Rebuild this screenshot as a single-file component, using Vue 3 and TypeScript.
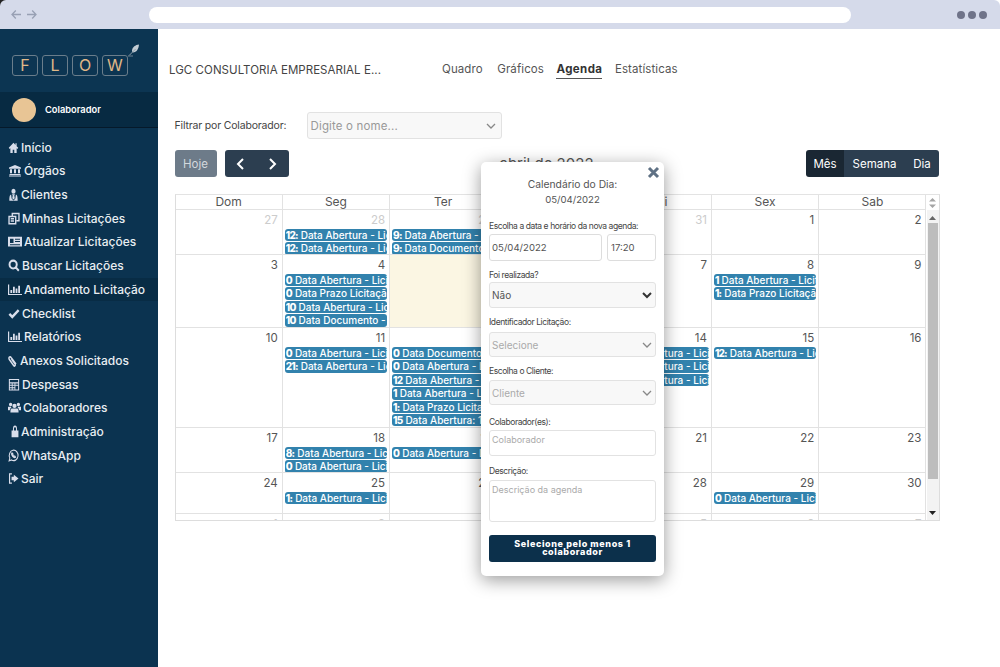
<script setup lang="ts">
interface Ev { n: string; t: string }
interface Cell { d: number; out?: boolean; now?: boolean; ev?: Ev[] }
interface Icon { fill?: string; stroke?: string; w: number; ml?: number; sw?: number }

const ab = 'Data Abertura - Licitação'
const pr = 'Data Prazo Licitação'
const doc = 'Data Documento - Licitação'

const weeks: { h: number; cells: Cell[] }[] = [
  { h: 45, cells: [
    { d: 27, out: true },
    { d: 28, out: true, ev: [{ n: '12:', t: ab }, { n: '12:', t: ab }] },
    { d: 29, out: true, ev: [{ n: '9:', t: ab }, { n: '9:', t: doc }] },
    { d: 30, out: true }, { d: 31, out: true }, { d: 1 }, { d: 2 }
  ] },
  { h: 73, cells: [
    { d: 3 },
    { d: 4, ev: [{ n: '0', t: ab }, { n: '0', t: pr }, { n: '10', t: ab }, { n: '10', t: doc }] },
    { d: 5, now: true }, { d: 6 }, { d: 7 },
    { d: 8, ev: [{ n: '1', t: ab }, { n: '1:', t: pr }] },
    { d: 9 }
  ] },
  { h: 100, cells: [
    { d: 10 },
    { d: 11, ev: [{ n: '0', t: ab }, { n: '21:', t: ab }] },
    { d: 12, ev: [{ n: '0', t: doc }, { n: '0', t: ab }, { n: '12', t: ab }, { n: '1', t: ab }, { n: '1:', t: pr }, { n: '15', t: 'Data Abertura: 15' }] },
    { d: 13 },
    { d: 14, ev: [{ n: '8', t: ab }, { n: '8', t: ab }, { n: '8', t: ab }] },
    { d: 15, ev: [{ n: '12:', t: ab }] },
    { d: 16 }
  ] },
  { h: 45, cells: [
    { d: 17 },
    { d: 18, ev: [{ n: '8:', t: ab }, { n: '0', t: ab }] },
    { d: 19, ev: [{ n: '0', t: ab }] },
    { d: 20 }, { d: 21 }, { d: 22 }, { d: 23 }
  ] },
  { h: 41, cells: [
    { d: 24 },
    { d: 25, ev: [{ n: '1:', t: ab }] },
    { d: 26 }, { d: 27 }, { d: 28 },
    { d: 29, ev: [{ n: '0', t: ab }] },
    { d: 30 }
  ] },
  { h: 20, cells: [1, 2, 3, 4, 5, 6, 7].map((d) => ({ d, out: true })) }
]

const days = ['Dom', 'Seg', 'Ter', 'Qua', 'Qui', 'Sex', 'Sab']

const bars = 'M0 1.5H1.2V11.8H14V13H0ZM2.4 7.5H4.2V10.8H2.4ZM5 4H6.8V10.8H5ZM7.6 6H9.4V10.8H7.6ZM10.2 3H12V10.8H10.2Z'

const nav: { label: string; icon: Icon; active?: boolean }[] = [
  { label: 'Início', icon: { w: 11, fill: 'M7 2 1 7.4 2 8.5 3 7.7V13H6V9.5H8V13H11V7.7L12 8.5 13 7.4 11 5.6V2.5H9.5V4.2Z' } },
  { label: 'Órgãos', icon: { w: 14, fill: 'M7 1 1 3.8V5H13V3.8ZM2 5.7V10H4V5.7ZM6 5.7V10H8V5.7ZM10 5.7V10H12V5.7ZM1.5 10.7H12.5V11.8H1.5ZM1 12.4H13V13.5H1Z' } },
  { label: 'Clientes', icon: { w: 11, fill: 'M7 .8A2.7 2.7 0 1 1 7 6.2 2.7 2.7 0 1 1 7 .8ZM5 6.8H9L8 8.2 8.6 11 7 12.4 5.4 11 6 8.2ZM4 7 4.6 11.4 7 13.4 9.4 11.4 10 7C11.6 7.3 12.3 9 12.3 13.6H1.7C1.7 9 2.4 7.3 4 7Z' } },
  { label: 'Minhas Licitações', icon: { w: 12, sw: 1.6, stroke: 'M5 4V1.5H12.8V9.3H10M1.2 4.8H9V12.6H1.2ZM3.2 7.2H7M3.2 9.6H7' } },
  { label: 'Atualizar Licitações', icon: { w: 14, fill: 'M0 2H14V12.5H0ZM2 4V8.5H5.5V4ZM7 4V5H12V4ZM7 6.5V7.5H12V6.5ZM2 10V11H12V10Z' } },
  { label: 'Buscar Licitações', icon: { w: 12, sw: 2.3, stroke: 'M6 1.8A4.2 4.2 0 1 1 6 10.2 4.2 4.2 0 1 1 6 1.8ZM9 9 12.6 12.6' } },
  { label: 'Andamento Licitação', icon: { w: 14, fill: bars }, active: true },
  { label: 'Checklist', icon: { w: 12, sw: 2.8, stroke: 'M1.6 7.4 5 10.8 12.4 3.4' } },
  { label: 'Relatórios', icon: { w: 14, fill: bars } },
  { label: 'Anexos Solicitados', icon: { w: 10, stroke: 'M11.2 11 4.4 3.8C2.6 1.8 .2 4 2 6L8 12.4C9.2 13.6 11 12 9.8 10.6L4.8 5.2' } },
  { label: 'Despesas', icon: { w: 12, fill: 'M1 1H13V13.5H1ZM2.2 2.2V4.6H11.8V2.2ZM2.2 5.8V7.4H4.4V5.8ZM5.4 5.8V7.4H7.6V5.8ZM8.6 5.8V7.4H11.8V5.8ZM2.2 8.4V10H4.4V8.4ZM5.4 8.4V10H7.6V8.4ZM8.6 8.4V12.4H11.8V8.4ZM2.2 11V12.4H4.4V11ZM5.4 11V12.4H7.6V11Z' } },
  { label: 'Colaboradores', icon: { w: 13, fill: 'M7 3A2.3 2.3 0 1 1 7 7.6 2.3 2.3 0 1 1 7 3ZM2.8 2A1.8 1.8 0 1 1 2.8 5.6 1.8 1.8 0 1 1 2.8 2ZM11.2 2A1.8 1.8 0 1 1 11.2 5.6 1.8 1.8 0 1 1 11.2 2ZM4 8H10C11 8 11.4 9 11.4 12.4H2.6C2.6 9 3 8 4 8ZM0 6.2H3.4C3.2 6.8 3.6 7.2 3.8 7.4 2.6 7.8 2.2 8.6 2 10H0ZM10.6 6.2H14V10H12C11.8 8.6 11.4 7.8 10.2 7.4 10.4 7.2 10.8 6.8 10.6 6.2Z' } },
  { label: 'Administração', icon: { w: 8, ml: 3, fill: 'M1 6H13V13.2H1ZM3.4 6V4.4C3.4 1.6 4.8.6 7 .6S10.6 1.6 10.6 4.4V6H8.8V4.4C8.8 3 8.2 2.4 7 2.4S5.2 3 5.2 4.4V6Z' } },
  { label: 'WhatsApp', icon: { w: 11, sw: 1.3, stroke: 'M1.4 12.8 2.3 9.6A5.6 5.6 0 1 1 4.5 11.8ZM5 4.2C4 5 4.6 6.6 5.8 7.8S8.4 9.6 9.6 8.8L8.6 7.6 7.8 8C7 7.6 6.4 7 6 6L6.4 5.4Z' } },
  { label: 'Sair', icon: { w: 11, sw: 1.5, stroke: 'M5 2H2V12H5', fill: 'M7.4 3 13.4 7 7.4 11V8.8H4.5V5.2H7.4Z' } }
]
</script>

<template>
  <div class="frame">
    <header class="chrome">
      <div class="arrows">
        <svg width="10" height="11" viewBox="0 0 10 11"><path d="M10 5.5H1M4.8 1.5 1 5.5l3.8 4" /></svg>
        <svg width="10" height="11" viewBox="0 0 10 11"><path d="M0 5.5h9M5.2 1.5 9 5.5l-3.8 4" /></svg>
      </div>
      <div class="url"></div>
      <div class="dots"><i></i><i></i><i></i></div>
    </header>

    <div class="app">
      <aside class="side">
        <div class="brand">
          <div class="logo">
            <span>F</span><span>L</span><span>O</span><span>W</span>
            <svg class="quill" width="12" height="14" viewBox="0 0 12 14">
              <path d="M11 .6C7.4 1 4.4 3 4 6.6 4 7.6 4.4 8.2 5 8.6 8.4 8.4 10.6 5.4 11 .6Z" fill="#c3ccd4" />
              <path d="M7.6 5 1 11.6" stroke="#8fa0ad" fill="none" />
              <path d="M0 12H5" stroke="#6a7f8e" fill="none" />
            </svg>
          </div>
        </div>
        <div class="user">
          <div class="avatar"></div>
          <span>Colaborador</span>
        </div>
        <nav class="nav">
          <a v-for="item in nav" :key="item.label" class="item" :class="{ on: item.active }">
            <svg
              class="ico"
              :width="item.icon.w"
              height="13"
              viewBox="0 0 14 14"
              preserveAspectRatio="none"
              :style="{ marginLeft: (item.icon.ml ?? 0) + 'px' }"
            >
              <path v-if="item.icon.fill" :d="item.icon.fill" fill="currentColor" fill-rule="evenodd" />
              <path v-if="item.icon.stroke" :d="item.icon.stroke" fill="none" stroke="currentColor" :stroke-width="item.icon.sw ?? 1.9" />
            </svg>
            <span>{{ item.label }}</span>
          </a>
        </nav>
      </aside>

      <main class="main">
        <div class="topline">
          <div class="company">LGC CONSULTORIA EMPRESARIAL E...</div>
          <div class="tabs">
            <a>Quadro</a><a>Gráficos</a><a class="cur">Agenda</a><a>Estatísticas</a>
          </div>
        </div>

        <div class="filter">
          <label>Filtrar por Colaborador:</label>
          <div class="sel sel-f">
            <span>Digite o nome...</span>
            <svg width="10" height="6" viewBox="0 0 10 6"><path d="M1 1l4 4 4-4" /></svg>
          </div>
        </div>

        <div class="toolbar">
          <div class="tb-left">
            <button class="btn hoje">Hoje</button>
            <div class="pair">
              <button class="btn"><svg width="9" height="12" viewBox="0 0 9 12"><path d="M7 1 2 6l5 5" /></svg></button>
              <button class="btn"><svg width="9" height="12" viewBox="0 0 9 12"><path d="M2 1l5 5-5 5" /></svg></button>
            </div>
          </div>
          <h2>abril de 2022</h2>
          <div class="views">
            <button class="btn act">Mês</button>
            <button class="btn">Semana</button>
            <button class="btn">Dia</button>
          </div>
        </div>

        <section class="cal">
          <div class="table">
            <div class="head">
              <div v-for="d in days" :key="d" class="hd">{{ d }}</div>
            </div>
            <div class="body">
              <div v-for="(w, i) in weeks" :key="i" class="week" :style="{ height: w.h + 'px' }">
                <div v-for="c in w.cells" :key="c.d" class="cell" :class="{ now: c.now }">
                  <div class="num" :class="{ out: c.out }">{{ c.d }}</div>
                  <div v-for="(e, k) in c.ev" :key="k" class="ev">
                    <b>{{ e.n }}</b><span>{{ e.t }}</span>
                  </div>
                </div>
              </div>
            </div>
          </div>
          <div class="scroll">
            <div class="sorts">
              <svg width="7" height="10" viewBox="0 0 7 10"><path d="M3.5 0 7 3.5H0ZM0 6.5H7L3.5 10Z" /></svg>
            </div>
            <div class="track">
              <svg class="up" width="7" height="4" viewBox="0 0 7 4"><path d="M3.5 0 7 4H0Z" /></svg>
              <div class="thumb"></div>
              <svg class="down" width="7" height="4" viewBox="0 0 7 4"><path d="M0 0H7L3.5 4Z" /></svg>
            </div>
          </div>
        </section>

        <div class="modal">
          <svg class="close" width="13" height="13" viewBox="0 0 13 13"><path d="M2 2l9 9M11 2l-9 9" /></svg>
          <div class="m-title">Calendário do Dia:<br /><span>05/04/2022</span></div>
          <label class="lb l1">Escolha a data e horário da nova agenda:</label>
          <div class="dt">
            <input class="inp date" value="05/04/2022" readonly />
            <input class="inp time" value="17:20" readonly />
          </div>
          <label class="lb l2">Foi realizada?</label>
          <div class="sel s-a">
            <span class="dark">Não</span>
            <svg class="bold" width="10" height="7" viewBox="0 0 10 7"><path d="M1 1l4 4 4-4" /></svg>
          </div>
          <label class="lb l3">Identificador Licitação:</label>
          <div class="sel s-b s-first">
            <span>Selecione</span>
            <svg width="10" height="6" viewBox="0 0 10 6"><path d="M1 1l4 4 4-4" /></svg>
          </div>
          <label class="lb l4">Escolha o Cliente:</label>
          <div class="sel s-b">
            <span>Cliente</span>
            <svg width="10" height="6" viewBox="0 0 10 6"><path d="M1 1l4 4 4-4" /></svg>
          </div>
          <label class="lb l5">Colaborador(es):</label>
          <div class="box b1">Colaborador</div>
          <label class="lb l6">Descrição:</label>
          <div class="box b2">Descrição da agenda</div>
          <button class="send">Selecione pelo menos 1 colaborador</button>
        </div>
      </main>
    </div>
  </div>
</template>

<style>
html, body { margin: 0; background: #fff; }
</style>

<style scoped>
* { box-sizing: border-box; }
.frame {
  width: 1000px; height: 667px; display: flex; flex-direction: column; overflow: hidden;
  font-family: Inter, "Open Sans", sans-serif; color: #444;
  background: linear-gradient(to right, #222 12px, #fff 12px);
}
.chrome {
  height: 29px; flex: none; background: #d5daea; display: flex; align-items: center;
  border-radius: 6px 6px 0 0; padding: 0 13px 0 11px;
}
.arrows { display: flex; gap: 6px; width: 138px; }
.arrows path { fill: none; stroke: #98a0b4; stroke-width: 1.3; }
.url { width: 702px; height: 16px; border-radius: 8px; background: #fff; margin-top: 1px; }
.dots { margin-left: auto; display: flex; gap: 3px; }
.dots i { width: 8px; height: 8px; border-radius: 50%; background: #6f7389; }

.app { flex: 1; display: flex; min-height: 0; }
.side { width: 158px; flex: none; background: #0b3350; color: #eef2f5; }
.brand { height: 63px; padding: 26px 0 0 12px; background: #0c3552; }
.logo { display: flex; gap: 4px; position: relative; width: 116px; }
.logo span {
  width: 26px; height: 21px; border: 1px solid #6a7d8b; border-radius: 3px; color: #e0b988;
  font-size: 16px; line-height: 19px; text-align: center; font-weight: 400;
}
.quill { position: absolute; left: 116px; top: -11px; }
.user {
  height: 36px; background: #072a42; border-bottom: 1px solid #05192a; display: flex; align-items: center;
  padding-left: 12px; gap: 9px; font-size: 9.3px; font-weight: 600; color: #fff;
}
.avatar { width: 24px; height: 24px; border-radius: 50%; background: #e8c595; }
.nav { padding-top: 7.4px; display: flex; flex-direction: column; }
.item {
  height: 23.7px; display: flex; align-items: center; padding-left: 8px; gap: 2px;
  font-size: 12px; font-weight: 500; color: #e9eef2; white-space: nowrap;
}
.item.on { background: #082c45; }
.ico { flex: none; color: #d9deeb; }

.main { flex: 1; position: relative; min-width: 0; padding: 0 61px 0 16.5px; background: #fff; }
.topline { height: 29px; margin-top: 26px; display: flex; align-items: center; margin-left: -5.5px; }
.company { font-size: 11.5px; color: #444; width: 273px; white-space: nowrap; letter-spacing: .05px; }
.tabs { display: flex; gap: 12.5px; font-size: 11.5px; color: #555; margin-top: 1px; }
.tabs a { padding: 0 0 2px; border-bottom: 1px solid transparent; letter-spacing: .1px; }
.tabs a:first-child { margin-right: 2px; }
.tabs a.cur { font-weight: 700; color: #333; border-bottom-color: #555; letter-spacing: .4px; }

.filter { display: flex; align-items: center; margin-top: 28px; height: 27px; }
.filter label { width: 132px; font-size: 10.5px; color: #444; letter-spacing: -.17px; white-space: nowrap; }
.sel {
  display: flex; justify-content: space-between; align-items: center; background: #f8f8f8;
  border: 1px solid #e2e2e2; border-radius: 3px; color: #999; font-size: 11.5px; padding: 0 3px 0 2px;
}
.sel-f { width: 195px; height: 27px; padding: 0 5px 0 3px; letter-spacing: .15px; }
.sel svg path { fill: none; stroke: #888; stroke-width: 1.3; }
.sel svg.bold path { stroke: #333; stroke-width: 2; }
.sel .dark { color: #555; }

.toolbar { display: flex; justify-content: space-between; align-items: flex-start; margin-top: 11px; height: 44px; position: relative; }
.tb-left { display: flex; gap: 8px; }
.btn {
  border: 0; background: #2c3e50; color: #fff; height: 27px; font: inherit; font-size: 11.5px; padding: 0;
  display: flex; align-items: center; justify-content: center;
}
.hoje { width: 42px; background: #6d7b89; color: #d3d8dd; border-radius: 3px; }
.pair { display: flex; border-radius: 3px; overflow: hidden; }
.pair .btn { width: 32px; }
.pair path { fill: none; stroke: #fff; stroke-width: 2; }
h2 { margin: 4px 0 0; position: absolute; left: 325px; font-size: 15px; font-weight: 400; color: #555; }
.views { display: flex; border-radius: 3px; overflow: hidden; }
.views .btn { width: 38px; }
.views .btn:nth-child(2) { width: 61px; }
.views .btn:nth-child(3) { width: 34px; }
.views .act { background: #1a2733; }

.cal { display: flex; height: 327px; border: 1px solid #ddd; border-top-color: #e3e3e3; width: 765px; overflow: hidden; }
.table { width: 751px; flex: none; display: flex; flex-direction: column; }
.head { display: grid; grid-template-columns: repeat(7, 1fr); height: 15px; flex: none; }
.hd { text-align: center; font-size: 12px; line-height: 14px; color: #555; border-right: 1px solid #e2e2e2; border-bottom: 1px solid #e2e2e2; }
.body { flex: 1; overflow: hidden; }
.week { display: grid; grid-template-columns: repeat(7, 1fr); }
.cell { border-right: 1px solid #e2e2e2; border-bottom: 1px solid #e2e2e2; overflow: hidden; min-width: 0; }
.cell.now { background: #fbf6e3; }
.num { text-align: right; font-size: 11.5px; line-height: 14px; padding: 3px 4px 0; height: 19px; color: #555; }
.num.out { color: #ccc; }
.ev {
  height: 12.4px; margin: 0 2px 1px; background: #3282ad; border-radius: 3px; color: #fff; font-size: 10px;
  line-height: 12.4px; white-space: nowrap; overflow: hidden; padding-left: 1px; font-weight: 500;
}
.ev b { font-weight: 800; margin-right: 3px; letter-spacing: -.8px; }

.scroll { flex: 1; display: flex; flex-direction: column; background: #f3f3f3; }
.sorts { height: 15px; flex: none; background: #fff; display: flex; justify-content: center; align-items: center; }
.sorts path { fill: #a5a5a5; }
.track { flex: 1; display: flex; flex-direction: column; align-items: center; padding-top: 6px; }
.up path { fill: #666; }
.down { margin-top: 32px; }
.down path { fill: #222; }
.thumb { width: 10px; height: 256px; background: #bdbdbd; margin-top: 3px; }

.modal {
  position: absolute; left: 323px; top: 133px; width: 183px; height: 414px; background: #fff; border-radius: 5px;
  box-shadow: 0 4px 18px rgba(0, 0, 0, .4); padding: 15px 8px 0;
}
.close { position: absolute; right: 4px; top: 4px; }
.close path { fill: none; stroke: #5f7184; stroke-width: 3; }
.m-title { text-align: center; font-size: 10.3px; line-height: 15px; color: #555; }
.m-title span { font-size: 9.6px; }
.lb { display: block; font-size: 8.5px; line-height: 10px; color: #444; letter-spacing: -.42px; white-space: nowrap; }
.l1 { margin-top: 14px; }
.l2 { margin-top: 9px; }
.l3 { margin-top: 9px; }
.l4 { margin-top: 9px; }
.l5 { margin-top: 12px; }
.l6 { margin-top: 10px; }
.dt { display: flex; justify-content: space-between; margin-top: 3px; }
.inp { height: 27px; border: 1px solid #ddd; border-radius: 3px; font: inherit; font-size: 9.6px; color: #555; padding: 0 2px; background: #fff; outline: none; }
.date { width: 113px; }
.time { width: 49px; padding-left: 3px; }
.s-a { height: 26px; margin-top: 2px; font-size: 10px; }
.s-b { height: 25px; margin-top: 4px; font-size: 10px; color: #aaa; }
.s-first { margin-top: 5px; }
.box { border: 1px solid #e2e2e2; border-radius: 3px; font-size: 9px; color: #aaa; padding: 3px 2px; margin-top: 3px; }
.b1 { height: 26px; }
.b2 { height: 42px; margin-top: 4px; }
.send {
  display: block; width: 167px; height: 27px; margin-top: 13px; border: 0; border-radius: 3px; background: #0c304b; color: #fff;
  font: inherit; font-size: 9px; font-weight: 800; line-height: 8.5px; letter-spacing: .6px; padding: 0 20px 1px;
}
</style>
